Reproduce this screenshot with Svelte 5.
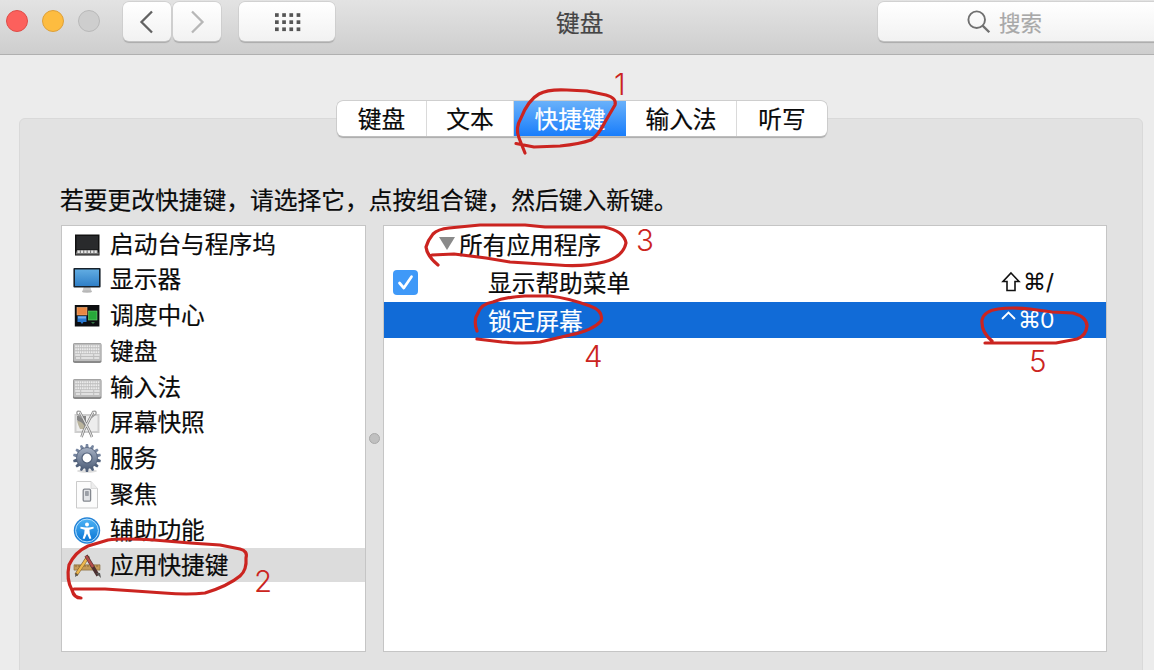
<script>
  const tabs = [
    { label: '键盘', width: 90 },
    { label: '文本', width: 87 },
    { label: '快捷键', width: 112, active: true },
    { label: '输入法', width: 111 },
    { label: '听写', width: 90 }
  ];
  const categories = [
    { label: '启动台与程序坞', icon: 'dock' },
    { label: '显示器', icon: 'display' },
    { label: '调度中心', icon: 'mission' },
    { label: '键盘', icon: 'keyboard' },
    { label: '输入法', icon: 'keyboard' },
    { label: '屏幕快照', icon: 'grab' },
    { label: '服务', icon: 'gear' },
    { label: '聚焦', icon: 'document' },
    { label: '辅助功能', icon: 'access' },
    { label: '应用快捷键', icon: 'apps', selected: true }
  ];
  const teeth = Array.from({ length: 14 }, (_, i) => (i * 360) / 14);
  const keyRows = [12.2, 15.2, 18.2];
  const keys = Array.from({ length: 11 }, (_, i) => 3.2 + i * 2.25);
</script>

<div class="window">
  <header>
    <div class="lights"><i class="red"></i><i class="yellow"></i><i class="gray"></i></div>
    <div class="nav">
      <button aria-label="后退"><svg width="48" height="40"><path d="M29 10.5 18.5 21 29 31.5" fill="none" stroke="#626262" stroke-width="2.3" /></svg></button>
      <button aria-label="前进"><svg width="48" height="40"><path d="M19 10.5 29.5 21 19 31.5" fill="none" stroke="#b7b7b7" stroke-width="2.3" /></svg></button>
    </div>
    <button class="all" aria-label="全部显示">
      <svg width="96" height="40">
        {#each [12.2, 19.3, 26.4] as y}{#each [36, 43.2, 50.4, 57.6] as x}<rect {x} {y} width="3.7" height="3.7" fill="#555" />{/each}{/each}
      </svg>
    </button>
    <h1>键盘</h1>
    <div class="search">
      <svg width="26" height="26" viewBox="0 0 26 26" fill="none" stroke="#707070" stroke-width="1.9"><circle cx="10.7" cy="10.7" r="8.3" /><path d="M16.6 16.6 23.3 23.3" stroke-width="2.3" /></svg>
      <span>搜索</span>
    </div>
  </header>

  <main>
    <section class="panel">
      <nav class="tabs">
        {#each tabs as t}
          <span class="tab" class:active={t.active} style="width:{t.width}px">{t.label}</span>
        {/each}
      </nav>
      <p>若要更改快捷键，请选择它，点按组合键，然后键入新键。</p>
      <div class="split">
        <ul class="list">
          {#each categories as c}
            <li class:selected={c.selected}>
              <svg class="icon" width="30" height="32" viewBox="0 0 30 32">
                {#if c.icon === 'dock'}
                  <rect x="3" y="6.5" width="24.5" height="21" fill="#111" />
                  <rect x="4.5" y="8" width="21.5" height="13.5" fill="#292a2c" />
                  <path d="M5 22h20.5l1.5 4.5H3.5z" fill="#777" />
                  <path d="M5.5 23.8h20" stroke="#e5e5e5" stroke-width="2.6" stroke-dasharray="2.3 1.1" />
                {:else if c.icon === 'display'}
                  <path d="M12 23h6l1.500 5h-9z" fill="#c9c9c9" /><ellipse cx="15" cy="28.500" rx="5" ry="1.2" fill="#b7b7b7" />
                  <rect x="1.4" y="5" width="27.2" height="19.5" rx="1" fill="#17212b" />
                  <rect x="3" y="6.5" width="24" height="16.500" fill="url(#screen)" />
                {:else if c.icon === 'mission'}
                  <rect x="2.8" y="6" width="24.6" height="21.5" fill="#0c0e10" />
                  <rect x="5" y="8.5" width="10" height="7.5" fill="#e88743" stroke="#f5b47c" stroke-width=".6" />
                  <rect x="16.5" y="12" width="8.5" height="9" fill="#27a93a" stroke="#70d875" stroke-width=".6" />
                  <path d="M5.5 17h9v6h-3l-1.5 2-1.5-2h-3z" fill="#2877cf" /><path d="M6 17.5h8v2H6z" fill="#70adeb" />
                  <path d="M19 23h4l-2 2z" fill="#347546" />
                {:else if c.icon === 'keyboard'}
                  <rect x="1" y="8" width="28.5" height="20" rx="1.8" fill="#898989" />
                  <rect x="1.6" y="8.5" width="27.3" height="17.5" rx="1.2" fill="#bdbdbd" />
                  {#each keyRows as y}{#each keys as x}<rect {x} y={y - 2} width="1.65" height="2" rx=".3" fill="#ececec" />{/each}{/each}
                  <path d="M3.2 20h5M9.2 20h12M22.2 20h5.4M4 23h4M9.2 23h12M22.2 23h5" stroke="#ececec" stroke-width="1.6" />
                {:else if c.icon === 'grab'}
                  <rect x="2.5" y="8" width="25" height="19" fill="#cfcfcf" />
                  <rect x="4.5" y="10" width="21" height="15" fill="#ededed" />
                  <path d="M5 10h9v13q-6-4-9-9z" fill="#858585" /><path d="M5 15q6 0 9 8H8q-2-4-3-8z" fill="#bab49d" />
                  <path d="M9.500 31 12 24 21 6.5M20 31 17 24 8 6.5" stroke="#777" stroke-width="2.5" fill="none" />
                  <path d="M9.500 31 12 24 21 6.5M20 31 17 24 8 6.5" stroke="#e2e2e2" stroke-width="1.2" fill="none" />
                  <path d="M9 5.500Q4 4 5 8l5 4M20 5.500Q25 4 24 8l-5 4" fill="none" stroke="#9b9b9b" stroke-width="1.3" />
                {:else if c.icon === 'gear'}
                  <ellipse cx="15" cy="29" rx="10" ry="1.8" fill="#ddd" />
                  {#each teeth as a}<path d="M12.9 7.500 13.900 2h2.200l1 5.500z" fill={a > 90 && a < 270 ? '#51617b' : '#7786a0'} transform="rotate({a} 15 16)" />{/each}
                  <circle cx="15" cy="16" r="10.5" fill="url(#steel)" stroke="#53617a" stroke-width=".8" />
                  <circle cx="15" cy="16" r="5" fill="#fff" stroke="#52617a" stroke-width="1.2" />
                {:else if c.icon === 'document'}
                  <path d="M4.5 3.5h14.500l6.500 7v19.500h-21z" fill="#fcfcfc" stroke="#c5c5c5" stroke-width=".9" />
                  <path d="M19 3.500v7h6.500" fill="#ececec" stroke="#d0d0d0" stroke-width=".7" />
                  <rect x="11.2" y="11.2" width="7.4" height="12" rx="1.3" fill="#e1e3e6" stroke="#84888f" stroke-width="1.3" />
                  <rect x="13" y="13" width="3.8" height="5" rx=".7" fill="#9b9fa6" />
                {:else if c.icon === 'access'}
                  <circle cx="15" cy="16.5" r="13.2" fill="#2483d6" /><circle cx="15" cy="16.5" r="11.4" fill="url(#blue)" stroke="#b7e1ff" stroke-width="1" />
                  <circle cx="15" cy="10.4" r="2" fill="#fff" />
                  <path d="M8.5 12.7 13.4 13.5h3.2l4.9-.8.2 1.8-4.3 1.2.4 4 1.6 4.8-1.9.6-2.5-5.6-2.5 5.6-1.9-.6 1.6-4.8.4-4-4.3-1.2z" fill="#fff" />
                {:else}
                  <path d="M2 15.8h26v5.3H2z" fill="#c59a57" stroke="#80643a" stroke-width=".6" />
                  <path d="M4 16v2m3-2v2m3-2v2m3-2v2m3-2v2m3-2v2m3-2v2m3-2v2" stroke="#765a32" stroke-width=".7" />
                  <path d="M16.500 7 4 26" stroke="#80602f" stroke-width="3.4" /><path d="M15 9.500 5 24.500" stroke="#edb84f" stroke-width="2.3" />
                  <path d="M14 6.500 26 26.500" stroke="#4c3031" stroke-width="3.5" /><path d="M14 6.800 21 18" stroke="#b24b49" stroke-width="2.4" />
                  <path d="M3 28 3.500 24.500 6 26zM24 24l5 5-1-5z" fill="#555" />
                {/if}
              </svg>
              <span>{c.label}</span>
            </li>
          {/each}
        </ul>
        <div class="grip"><i></i></div>
        <div class="table">
          <div class="row group"><svg width="16" height="14"><path d="M0 0h16L8 13z" fill="#8a8a8a" /></svg><span>所有应用程序</span></div>
          <div class="row">
            <span class="check"><svg width="25" height="25"><path d="M6.5 13 10.8 18 18.5 6.7" fill="none" stroke="#fff" stroke-width="2.7" stroke-linecap="round" stroke-linejoin="round" /></svg></span>
            <span class="name">显示帮助菜单</span>
            <span class="keys"><b class="shift"><svg width="20" height="22"><path d="M10 2 18 10.500H14V19.500H6V10.500H2Z" fill="none" stroke="#111" stroke-width="1.6" /></svg></b><b class="cmd">⌘</b><b class="slash">/</b></span>
          </div>
          <div class="row current">
            <span class="check none"></span>
            <span class="name">锁定屏幕</span>
            <span class="keys"><b class="ctrl"><svg width="15" height="9"><path d="M1 8 7.5 1.5 14 8" fill="none" stroke="#fff" stroke-width="1.8" /></svg></b><b class="cmd">⌘</b><b class="zero">0</b></span>
          </div>
        </div>
      </div>
    </section>
  </main>

  <svg class="marks" width="1154" height="670" fill="none" stroke="#cb2420" stroke-width="3.2" stroke-linecap="round" stroke-linejoin="round">
    <defs>
      <linearGradient id="screen" x2="0" y2="1"><stop stop-color="#61ace2" /><stop offset="1" stop-color="#2f7fc7" /></linearGradient>
      <linearGradient id="steel" x2="0" y2="1"><stop stop-color="#a6b1c4" /><stop offset="1" stop-color="#53637d" /></linearGradient>
      <linearGradient id="blue" x2="0" y2="1"><stop stop-color="#4cb2f4" /><stop offset="1" stop-color="#0874d4" /></linearGradient>
    </defs>
    <path d="M525 153 519 138Q515 128 521 118C525 108 530 99 539 94Q548 89 567 90L587 91 606 95Q617 98 615 105L605 122Q598 136 591 140Q580 144 560 146L534 147 516 143.5" />
    <path d="M81 598Q74 598 72 590C68 583 67 575 69 565Q75 552 88 546L108 540Q122 538 154 540L190 543 220 545 240 549Q248 551 246 558Q247 570 240 576Q228 586 205 593Q188 595 164 593L135 591 105 589 74 589" />
    <path d="M438 265Q427 256 426 247Q428 240 433 234Q438 229 449 228L480 225 525 225 545 227 604 227Q624 231 626 243Q623 257 604 262Q584 267 558 265L510 262 486 258 454 254 432 255" />
    <path d="M477 331Q473 320 478 313Q481 304 493 302Q505 297 525 296L550 296Q568 298 590 306Q604 311 601 321Q592 331 570 335L540 342Q524 344 502 342L477 339" />
    <path d="M992 341Q981 332 982 320Q984 311 998 309Q1012 307 1030 309L1052 312 1073 313Q1087 317 1087 326Q1086 336 1077 339L1056 343 1036 343 985 343" />
    <g class="digits">
      <text x="614" y="95">1</text><text x="254" y="592">2</text><text x="636" y="251">3</text><text x="584" y="367">4</text><text x="1029" y="372">5</text>
    </g>
  </svg>
</div>

<style>
  :global(body) { margin: 0; overflow: hidden; }
  .window { position: relative; width: 1154px; height: 670px; overflow: hidden; display: flex; flex-direction: column; background: #ececec; color: #0a0a0a; font: 23.7px/34px "Noto Sans CJK SC", sans-serif; -webkit-text-stroke: .2px; }
  header { box-sizing: border-box; height: 55px; flex: none; display: flex; align-items: flex-start; padding: 2px 0 0 6px; background: linear-gradient(#e3e3e3, #cecece); border-bottom: 1.5px solid #b0b0b0; }
  .lights { display: flex; flex: none; gap: 14px; padding-top: 8px; width: 117px; }
  .lights i { box-sizing: border-box; width: 22px; height: 22px; border-radius: 50%; border-width: 1px; border-style: solid; }
  .lights .red { background: #fc605c; border-color: #df4c47; }
  .lights .yellow { background: #fdbc40; border-color: #dea039; }
  .lights .gray { background: #cecece; border-color: #b9b9b9; }
  .nav { display: flex; flex: none; gap: 2px; }
  button { flex: none; padding: 0; border: 0; width: 48px; height: 39px; border-radius: 6px; background: linear-gradient(#fff, #f2f2f2); box-shadow: 0 0 0 .7px #ccc, 0 1.5px 1px #aaa; }
  button svg { display: block; margin-top: -2px; }
  .all { width: 96px; margin-left: 18px; }
  h1 { flex: none; font-size: 23.7px; line-height: 34px; margin: 3px 0 0 221px; font-weight: 400; color: #454545; width: 322px; }
  .search { box-sizing: border-box; width: 290px; height: 39px; flex: none; padding-left: 88px; border-radius: 6px; display: flex; align-items: center; gap: 7px; background: linear-gradient(#fff, #f2f2f2); box-shadow: 0 0 0 .7px #ccc, 0 1.5px 1px #aaa; color: #a8a8a8; font-size: 21.5px; }
  main { flex: 1; padding: 63px 11px 0 19px; }
  .panel { box-sizing: border-box; height: 570px; background: #e2e2e2; border: 1px solid #d9d9d9; border-radius: 6px; padding: 0 35px 0 41px; }
  .tabs { display: flex; width: 490px; height: 35px; margin: -18px 0 0 276px; border-radius: 6px; overflow: hidden; background: #fff; box-shadow: 0 0 0 .7px #c5c5c5, 0 1.3px 1px #aaa; }
  .tab { box-sizing: border-box; flex: none; line-height: 34px; text-align: center; border-right: 1px solid #dadada; }
  .tab:last-child { border: 0; }
  .tab.active { background: linear-gradient(#69b1fa, #197dfb); color: #fff; border: 0; }
  p { margin: 46px 0 9px -1px; height: 34px; line-height: 34px; font-size: 23.75px; white-space: nowrap; }
  .split { display: grid; grid-template-columns: 305px 17px 724px; height: 427px; }
  .list, .table { box-sizing: border-box; margin: 0; background: #fff; border: 1.5px solid #c5c5c5; }
  .list { list-style: none; padding: 0; }
  li { height: 34px; margin-bottom: 1.78px; display: flex; align-items: center; }
  li span { margin-top: -1px; }
  li.selected { background: #dcdcdc; }
  .icon { margin: 1px 8px 0 10px; flex: none; }
  .grip { display: flex; align-items: center; justify-content: center; }
  .grip i { width: 9px; height: 9px; border-radius: 50%; background: #c0c0c0; border: 1px solid #a9a9a9; }
  .row { box-sizing: border-box; height: 35.5px; margin-bottom: 2.5px; display: flex; align-items: center; padding-left: 9px; }
  .group { padding-left: 55px; gap: 4px; }
  .check { width: 25px; height: 25px; border-radius: 4px; background: #3f99f8; flex: none; margin-top: 2px; }
  .check svg { display: block; }
  .none { background: none; }
  .name { width: 513px; margin-left: 70px; flex: none; }
  .row.current { background: #116bd7; color: #fff; }
  .keys { display: flex; align-items: center; height: 34px; }
  .keys b { font-weight: 400; line-height: 34px; }
  .keys svg { display: block; }
  .shift { width: 22px; }
  .cmd { width: 22px; font-family: "DejaVu Sans", sans-serif; font-size: 23px; -webkit-text-stroke: 0; }
  .slash { font-family: Inter, sans-serif; font-size: 22px; margin-left: 1px; }
  .ctrl { width: 17px; padding-bottom: 8px; }
  .zero { font-family: Inter, sans-serif; font-size: 23px; -webkit-text-stroke: 0; }
  .marks { position: absolute; inset: 0; pointer-events: none; }
  .marks { -webkit-text-stroke: 0; }
  .digits { fill: #cb2420; stroke: none; font: 300 29.5px Inter, "Liberation Sans", sans-serif; }
</style>
